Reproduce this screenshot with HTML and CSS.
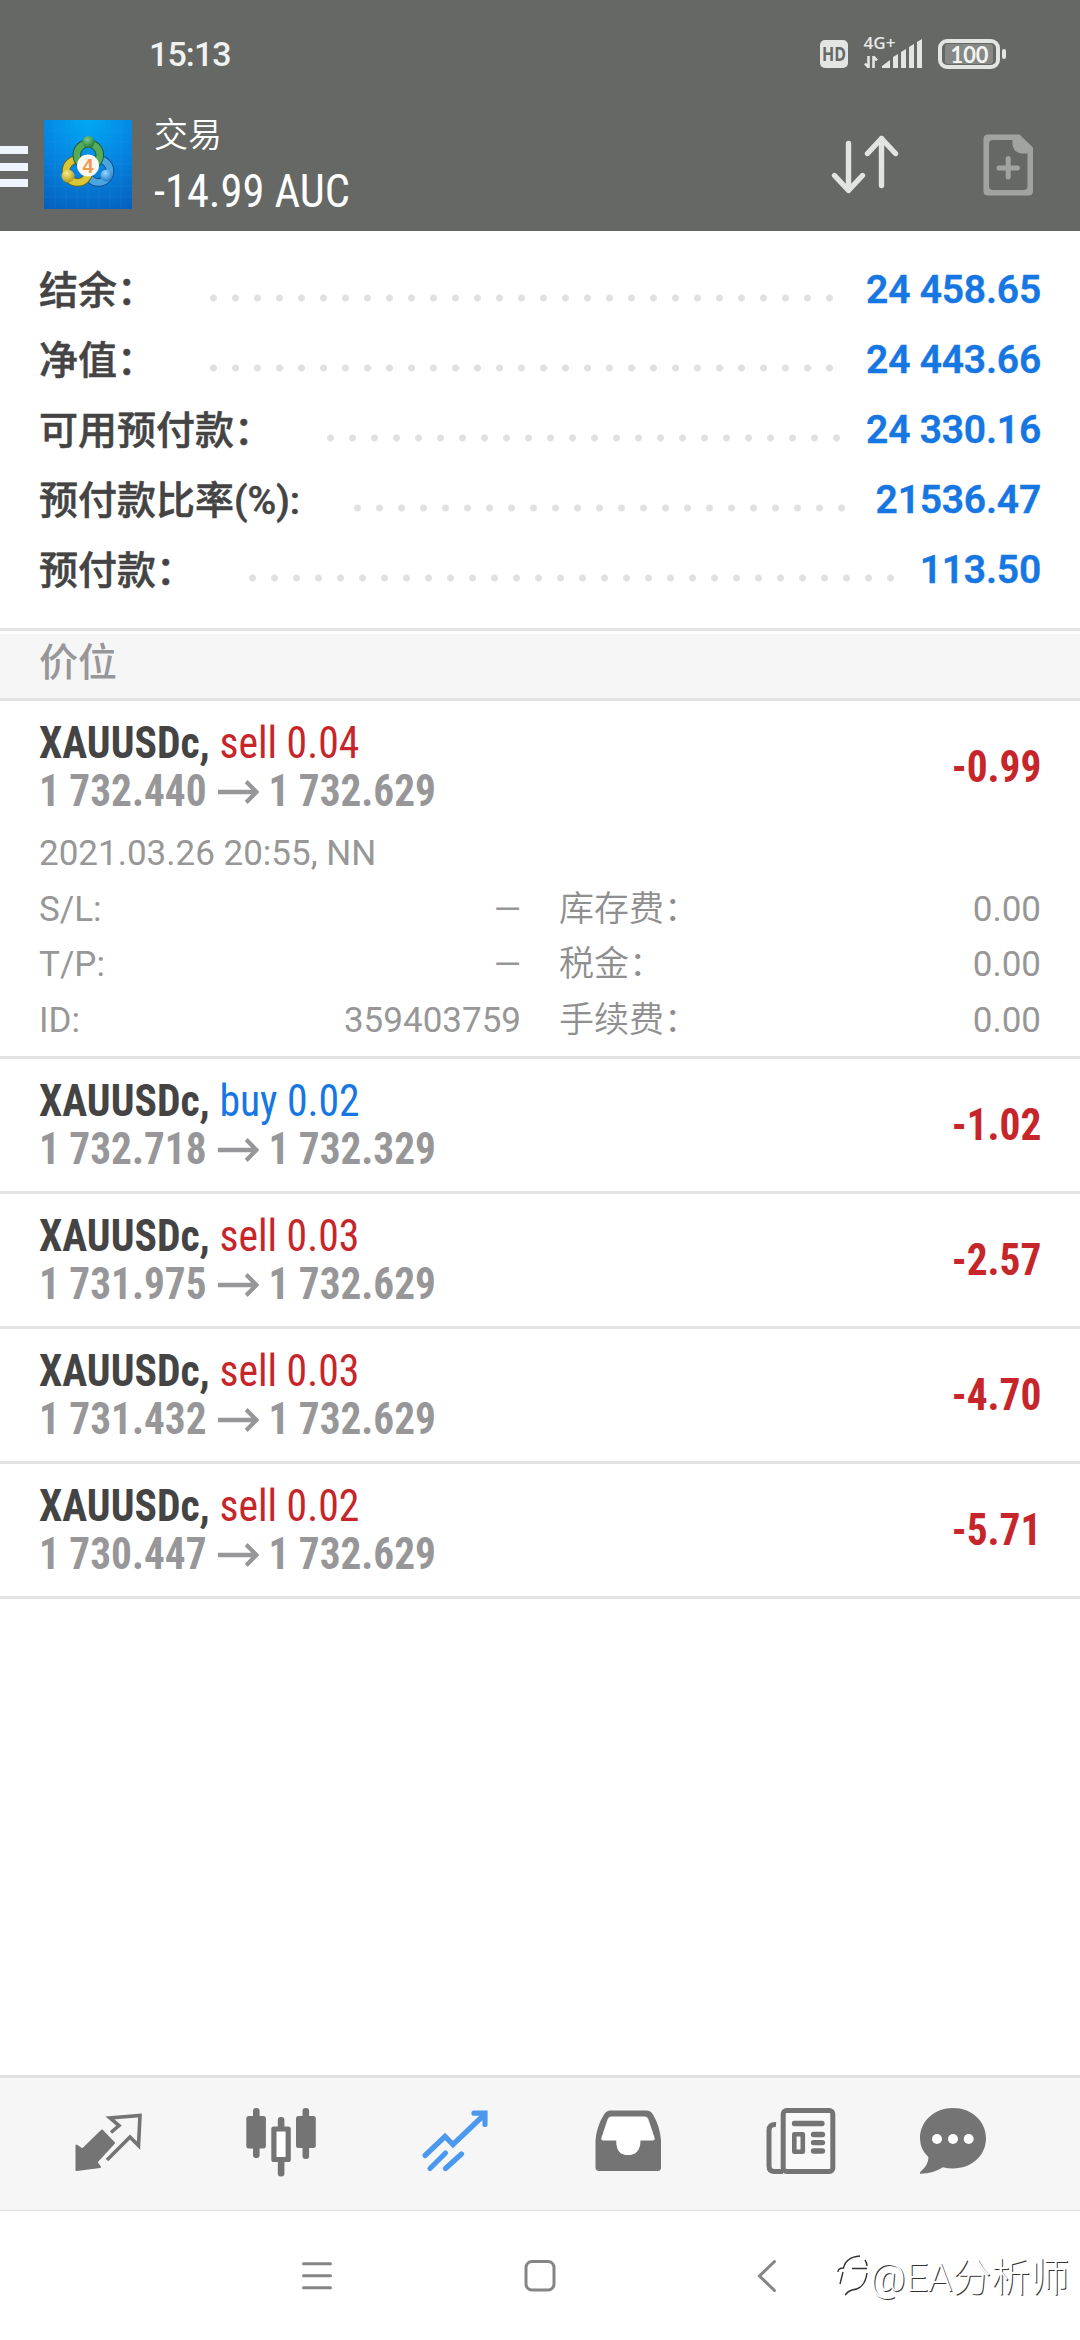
FILE: index.html
```html
<!DOCTYPE html>
<html lang="zh-CN">
<head>
<meta charset="utf-8">
<title>交易</title>
<link rel="stylesheet" href="styles.css">
</head>
<body>
<svg class="defs" width="0" height="0">
  <symbol id="arrow" viewBox="0 0 42 24">
    <path d="M0 12.5H40M29 2.5l10.5 10L29 22.5" fill="none" stroke="currentColor" stroke-width="4.2"/>
  </symbol>
</svg>
<div class="screen">
  <header class="header">
    <div class="status">
      <span class="clock">15:13</span>
      <svg class="status-icons" viewBox="816 32 196 44" width="196" height="44">
        <rect x="820" y="40" width="28" height="28" rx="5" fill="#e2e5e2"/>
        <text x="834" y="61" class="hd" text-anchor="middle" textLength="24" lengthAdjust="spacingAndGlyphs">HD</text>
        <text x="863.5" y="49.3" class="net" textLength="32" lengthAdjust="spacingAndGlyphs">4G+</text>
        <path d="M868.5 56v12M868.5 67.5l-3.5-4M873.5 68v-12M873.5 56.500l3.500 4" stroke="#e2e5e2" stroke-width="2.6" fill="none"/>
        <path d="M882 68v-2l8-6v8zM893 68V57l5-3v14zM901 68V52l5-3v19zM909 68V47l5-3v24zM917 68V42l5-3v29z" fill="#e2e5e2"/>
        <rect x="945" y="44" width="48" height="20" rx="3" fill="#868886"/>
        <rect x="940" y="41" width="58" height="26" rx="7" fill="none" stroke="#e2e5e2" stroke-width="4"/>
        <rect x="1002" y="49" width="4" height="10" rx="2" fill="#e2e5e2"/>
        <text x="969.500" y="62.500" class="batt" text-anchor="middle" textLength="38" lengthAdjust="spacingAndGlyphs">100</text>
      </svg>
    </div>
    <div class="appbar">
      <div class="burger"><i></i><i></i><i></i></div>
      <svg class="logo" viewBox="0 0 88 89" width="88" height="89">
        <defs>
          <radialGradient id="bg" cx=".5" cy="0" r="1.1"><stop offset="0" stop-color="#00a9f2"/><stop offset=".5" stop-color="#0585e0"/><stop offset="1" stop-color="#0560bd"/></radialGradient>
          <radialGradient id="gr" cx=".4" cy=".3" r=".7"><stop offset="0" stop-color="#7fca86"/><stop offset="1" stop-color="#1f7d38"/></radialGradient>
          <radialGradient id="ye" cx=".4" cy=".3" r=".7"><stop offset="0" stop-color="#f8ee8e"/><stop offset="1" stop-color="#b59a12"/></radialGradient>
          <radialGradient id="bl" cx=".4" cy=".3" r=".7"><stop offset="0" stop-color="#9ad8ff"/><stop offset="1" stop-color="#1f7cc8"/></radialGradient>
        </defs>
        <rect width="88" height="89" fill="url(#bg)"/>
        <path d="M11 0v89M22 0v89M33 0v89M44 0v89M55 0v89M66 0v89M77 0v89M0 11h88M0 22h88M0 33h88M0 44h88M0 55h88M0 66h88M0 77h88" stroke="#3fb0f5" stroke-opacity=".12"/>
        <circle cx="54.500" cy="51" r="11.500" fill="none" stroke="#134f8c" stroke-width="8.500"/>
        <circle cx="54.500" cy="51" r="11.500" fill="none" stroke="#4ba5e0" stroke-width="6.500"/>
        <circle cx="33.500" cy="51" r="11.500" fill="none" stroke="#5e6a22" stroke-width="8.500"/>
        <circle cx="33.500" cy="51" r="11.500" fill="none" stroke="#d9c636" stroke-width="6.500"/>
        <circle cx="44.300" cy="35" r="11.500" fill="none" stroke="#1d5c40" stroke-width="8.500"/>
        <circle cx="44.300" cy="35" r="11.500" fill="none" stroke="#56ab58" stroke-width="6.500"/>
        <circle cx="44.500" cy="22" r="6" fill="url(#gr)"/>
        <circle cx="24" cy="56" r="6.500" fill="url(#ye)"/>
        <circle cx="62.500" cy="55.500" r="6" fill="url(#bl)"/>
        <circle cx="44" cy="45.500" r="11" fill="#fbf8f3"/>
        <text x="44" y="52.500" text-anchor="middle" class="four">4</text>
      </svg>
      <div class="heading">
        <div class="title">交易</div>
        <div class="balance cond">-14.99 AUC</div>
      </div>
      <svg class="sort" viewBox="830 130 70 66" width="70" height="66">
        <path d="M848.500 143.500V190M834.500 175.500l14 15 14-15M881.500 185.500V138.500M867.500 153.500l14-15 14 15" fill="none" stroke="#e2e4e1" stroke-width="5.400" stroke-linecap="round" stroke-linejoin="round"/>
      </svg>
      <svg class="neworder" viewBox="980 130 56 68" width="56" height="68">
        <path fill-rule="evenodd" d="M988 134.500h31.500L1033 147.500V191q0 4.500-4.500 4.500H988q-4.500 0-4.500-4.500V139q0-4.500 4.500-4.500zM993 140q-4 0-4 4v42q0 4 4 4h30.500q4 0 4-4v-32.500h-6q-8-1-9-9v-4.500z" fill="#a0a3a0"/>
        <path d="M999 168h18.500M1008.200 158.500v18.500" stroke="#a0a3a0" stroke-width="5" stroke-linecap="round"/>
      </svg>
    </div>
  </header>

  <section class="summary">
    <div class="sum-row"><span class="label">结余：</span><i class="dots"></i><span class="amount">24 458.65</span></div>
    <div class="sum-row"><span class="label">净值：</span><i class="dots"></i><span class="amount">24 443.66</span></div>
    <div class="sum-row"><span class="label">可用预付款：</span><i class="dots"></i><span class="amount">24 330.16</span></div>
    <div class="sum-row"><span class="label">预付款比率(%):</span><i class="dots"></i><span class="amount">21536.47</span></div>
    <div class="sum-row"><span class="label">预付款：</span><i class="dots"></i><span class="amount">113.50</span></div>
  </section>
  <h2 class="section-title">价位</h2>

  <main class="positions">
    <article class="position">
      <div class="head">
        <div class="info">
          <div class="line cond"><b>XAUUSDc,</b> <span class="sell">sell 0.04</span></div>
          <div class="line prices cond"><span>1 732.440</span><svg class="to"><use href="#arrow"/></svg><span>1 732.629</span></div>
        </div>
        <div class="profit cond">-0.99</div>
      </div>
      <div class="details">
        <div class="date">2021.03.26 20:55, NN</div>
        <div class="grid">
          <div class="kv"><span>S/L:</span><span>—</span></div><div class="kv"><span class="cjk">库存费：</span><span>0.00</span></div>
          <div class="kv"><span>T/P:</span><span>—</span></div><div class="kv"><span class="cjk">税金：</span><span>0.00</span></div>
          <div class="kv"><span>ID:</span><span>359403759</span></div><div class="kv"><span class="cjk">手续费：</span><span>0.00</span></div>
        </div>
      </div>
    </article>
    <article class="position">
      <div class="head">
        <div class="info">
          <div class="line cond"><b>XAUUSDc,</b> <span class="buy">buy 0.02</span></div>
          <div class="line prices cond"><span>1 732.718</span><svg class="to"><use href="#arrow"/></svg><span>1 732.329</span></div>
        </div>
        <div class="profit cond">-1.02</div>
      </div>
    </article>
    <article class="position">
      <div class="head">
        <div class="info">
          <div class="line cond"><b>XAUUSDc,</b> <span class="sell">sell 0.03</span></div>
          <div class="line prices cond"><span>1 731.975</span><svg class="to"><use href="#arrow"/></svg><span>1 732.629</span></div>
        </div>
        <div class="profit cond">-2.57</div>
      </div>
    </article>
    <article class="position">
      <div class="head">
        <div class="info">
          <div class="line cond"><b>XAUUSDc,</b> <span class="sell">sell 0.03</span></div>
          <div class="line prices cond"><span>1 731.432</span><svg class="to"><use href="#arrow"/></svg><span>1 732.629</span></div>
        </div>
        <div class="profit cond">-4.70</div>
      </div>
    </article>
    <article class="position">
      <div class="head">
        <div class="info">
          <div class="line cond"><b>XAUUSDc,</b> <span class="sell">sell 0.02</span></div>
          <div class="line prices cond"><span>1 730.447</span><svg class="to"><use href="#arrow"/></svg><span>1 732.629</span></div>
        </div>
        <div class="profit cond">-5.71</div>
      </div>
    </article>
  </main>

  <nav class="tabs">
    <svg class="tab" viewBox="68 44 80 80">
      <path d="M76.500 85.500l6 4L102 70.500l12 12.500-17.500 19 3.500 5-23.500 3z" fill="#747474" stroke="#747474" stroke-width="2" stroke-linejoin="round"/>
      <path d="M111 72.500l8-7-9-7.500 30-2.500-1.500 30-8.500-8.500-23 23" fill="none" stroke="#747474" stroke-width="3.600"/>
    </svg>
    <svg class="tab" viewBox="241 44 80 80" fill="#747474">
      <rect x="246.300" y="56" width="19.600" height="32.500" rx="2.500"/><rect x="253" y="48" width="6.600" height="50" rx="3"/>
      <rect x="296" y="56" width="19.800" height="32" rx="2.500"/><rect x="302.500" y="48" width="6.600" height="51" rx="3"/>
      <rect x="277.800" y="57" width="6.600" height="13" rx="3"/><rect x="277.800" y="98" width="6.600" height="18.500" rx="3"/>
      <rect x="273.900" y="69" width="14.300" height="30.500" fill="#fff" stroke="#747474" stroke-width="5.200" stroke-linejoin="round"/>
    </svg>
    <svg class="tab" viewBox="414 44 80 80">
      <path d="M424 95.500L444 76.500l8 8L484 54M473 53.200h11V64.500M429 108.500l15.500-15.500M444.500 108.500l16-14.500" fill="none" stroke="#4b99ee" stroke-width="5.200" stroke-linecap="round"/>
    </svg>
    <svg class="tab" viewBox="587.500 44 80 80">
      <path d="M610 55.500h35l12 25.500h-59z" fill="#fff"/>
      <path fill-rule="evenodd" d="M610 50.500h36q4 0 6.500 4 7 12 8 26v27q0 3.500-3.500 3.500h-58q-4 0-4-3.500v-27q1-14 8.500-26 2.500-4 6.500-4zM611 56.500q-3 0-4 3l-6 18q-1 3 2 3h13q0 14.500 11.500 14.500T639 80.500h13q3 0 2-3l-6-18q-1-3-4-3z" fill="#747474"/>
      <path d="M615 80h25q0 15-12.500 15T616 80z" fill="#fff"/>
    </svg>
    <svg class="tab" viewBox="761 44 80 80">
      <path d="M776 64.500q-7-.5-7 6V106q0 5.500 5.500 5.500H783" fill="none" stroke="#747474" stroke-width="5"/>
      <rect x="783.200" y="50.600" width="49.600" height="60.800" rx="3.500" fill="#f9f9f9" stroke="#747474" stroke-width="5"/>
      <rect x="794.300" y="74.300" width="8.500" height="17.400" fill="none" stroke="#747474" stroke-width="4.600" stroke-linejoin="round"/>
      <path d="M794.500 63.500h27.500M813.500 74.500h9M813.500 82.600h9M813.500 91h9" stroke="#747474" stroke-width="5.300" stroke-linecap="round"/>
    </svg>
    <svg class="tab last" viewBox="913 44 80 80">
      <path d="M953 48c18.500 0 33 13 33 30.300S971.500 108.500 953 108.500q-5 0-10-1.300-10 6.300-22 6.500-2 0-.500-2 8-7 8-14.500-8.500-8-8.500-19C920 61 934.500 48 953 48z" fill="#747474"/>
      <circle cx="937" cy="79" r="5" fill="#fff"/><circle cx="953" cy="79" r="5" fill="#fff"/><circle cx="968.700" cy="79" r="5" fill="#fff"/>
    </svg>
  </nav>

  <footer class="sysnav">
    <svg class="sys menu" viewBox="0 0 34 34"><path d="M3.500 4.700h27M3.500 16.800h27M3.500 28.800h27" stroke="#858585" stroke-width="3" stroke-linecap="round"/></svg>
    <svg class="sys home" viewBox="0 0 34 34"><rect x="3" y="2.500" width="28" height="28.500" rx="6" fill="none" stroke="#858585" stroke-width="3"/></svg>
    <svg class="sys back" viewBox="0 0 34 34"><path d="M24.500 2.500L9.500 17l15 14.500" fill="none" stroke="#858585" stroke-width="3" stroke-linecap="round"/></svg>
    <div class="watermark">
      <svg width="34" height="44" viewBox="0 0 34 44"><path d="M2 20q0-4 5.500-4Q10 5 24 4M7 20L4 32M16 16.500h15M29 8q2 3 2 6M31 21q-2 16-15 17-4 1-7 5" fill="none" stroke="#333" stroke-width="1.400"/></svg>
      <span>@EA分析师</span>
    </div>
  </footer>
</div>
</body>
</html>
```

FILE: styles.css
```css
* { box-sizing: border-box; }
body { margin: 0; background: #fff; font-family: Roboto, "Noto Sans CJK SC", sans-serif; }
.defs { display: block; position: absolute; }
.screen { width: 1080px; height: 2340px; display: flex; flex-direction: column; overflow: hidden; }
.cond { font-family: "Roboto Condensed", Roboto, "Noto Sans CJK SC", sans-serif; font-stretch: 75%; }

.header { height: 231px; background: #666865; color: #fff; }
.status { height: 108px; display: flex; align-items: center; justify-content: space-between; padding: 0 68px 0 149px; }
.clock { font-size: 34px; font-weight: 500; color: #f0f2f0; letter-spacing: -0.9px; }
.hd { font: 700 19px "Open Sans", sans-serif; fill: #666865; }
.net { font: 600 16px "Open Sans", sans-serif; fill: #e8eae8; }
.batt { font: 700 23px Lato, sans-serif; fill: #f2f4f2; }
.four { font: 700 20px "Liberation Sans", sans-serif; fill: #f09a50; }
.appbar { display: flex; height: 123px; }
.burger { width: 28px; padding-top: 38px; display: flex; flex-direction: column; gap: 8.600px; }
.burger i { height: 8px; background: #eef5fd; }
.logo { margin: 12px 0 0 16px; }
.heading { flex: 1; padding: 6px 0 0 22px; }
.title { font-size: 34px; line-height: 42px; font-weight: 350; }
.balance { margin-top: 8px; font-size: 47px; line-height: 54px; white-space: nowrap; transform: scaleX(.945); transform-origin: left; }
.sort { margin: 22px 80px 0 0; }
.neworder { margin: 22px 44px 0 0; }

.summary { height: 400px; padding: 24px 39px 0 39px; border-bottom: 3px solid #e3e3e3; }
.sum-row { height: 70px; display: flex; align-items: center; font-size: 39px; }
.label { color: #444; font-weight: 500; white-space: nowrap; padding-bottom: 6px; -webkit-text-stroke: .5px #444; }
.dots { flex: 1; height: 8px; margin: 15px 22.500px 0 54px; background: radial-gradient(circle at 3.500px 4px, #e0e0e0 3px, transparent 4px) 0 0 / 22px 8px repeat-x; }
.amount { color: #1677e2; font-weight: 600; white-space: nowrap; letter-spacing: -.2px; -webkit-text-stroke: .4px #1677e2; }
.section-title { margin: 3px 0 0; height: 67px; padding: 0 39px; background: #f6f6f6; border-bottom: 3px solid #e3e3e3; color: #979799; font-size: 39px; line-height: 58px; font-weight: 500; }

.positions { flex: 1; }
.position { border-bottom: 3px solid #e3e3e3; padding: 0 39px; }
.head { padding: 18px 0; display: flex; align-items: center; justify-content: space-between; }
.line { font-size: 44px; line-height: 48px; height: 48px; white-space: nowrap; color: #444; transform: scaleX(.947); transform-origin: left; }
.prices { display: flex; align-items: center; font-weight: 700; color: #979799; transform: scaleX(.938); }
.to { width: 45px; height: 25px; margin: 0 10px 0 11px; }
.sell { color: #c6262a; }
.buy { color: #1677e2; }
.profit { font-size: 44px; line-height: 48px; font-weight: 700; color: #c6262a; transform: scaleX(.94); transform-origin: right; }
.details { margin-top: -7px; padding-bottom: 8px; font-size: 35px; line-height: 55.600px; font-weight: 400; color: #979797; }
.cjk { font-weight: 350; color: #8f8f8f; }
.grid { display: grid; grid-template-columns: 1fr 1fr; column-gap: 38px; }
.kv { display: flex; justify-content: space-between; height: 55.600px; }

.tabs { height: 136px; background: #f6f6f6; border-top: 3px solid #e1e1e1; border-bottom: 1px solid #dedede; display: flex; align-items: center; gap: 93.300px; padding-left: 68px; }
.tab { width: 80px; height: 80px; flex: none; }
.tab.last { margin-left: -21.300px; }
.sysnav { height: 129px; display: flex; align-items: center; padding-left: 300px; }
.sys { width: 34px; height: 34px; flex: none; }
.home { margin-left: 189px; }
.back { margin-left: 193px; }
.watermark { display: flex; align-items: center; margin: 0 0 4px 52px; font-size: 39px; font-weight: 300; color: #fff; text-shadow: 1px 1px 0 #333; white-space: nowrap; }
```
